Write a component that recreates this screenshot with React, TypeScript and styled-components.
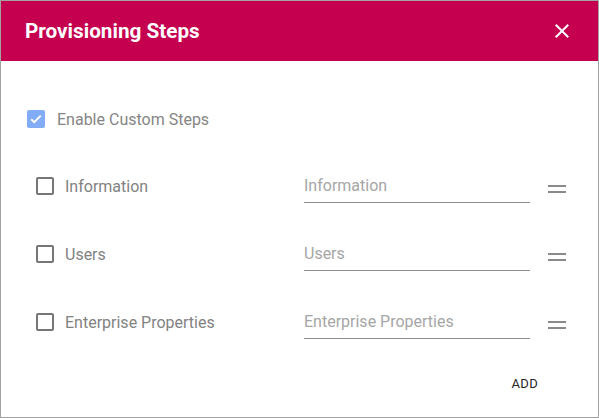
import React from "react";
import styled, { createGlobalStyle } from "styled-components";

const Global = createGlobalStyle`
  html, body { margin: 0; padding: 0; background: #ffffff; }
  body { font-family: Roboto, "Noto Sans", Arial, sans-serif; }
  * { box-sizing: border-box; }
`;

const Dialog = styled.div`
  width: 599px;
  height: 418px;
  border: 1px solid #a3a3a3;
  display: flex;
  flex-direction: column;
  background: #fff;
`;

const Header = styled.header`
  height: 60px;
  flex: none;
  background: #c4004f;
  display: flex;
  align-items: center;
  justify-content: space-between;
  padding: 0 24px;
`;

const Title = styled.h2`
  margin: 0;
  color: #fff;
  font-size: 20.7px;
  font-weight: 700;
  letter-spacing: 0;
`;

const CloseButton = styled.button`
  width: 24px;
  height: 24px;
  padding: 0;
  border: 0;
  background: transparent;
  display: flex;
  align-items: center;
  justify-content: center;
  cursor: pointer;
`;

const Body = styled.div`
  flex: 1;
  padding: 38px 0 0 26px;
  display: flex;
  flex-direction: column;
`;

const EnableRow = styled.label`
  height: 40px;
  display: flex;
  align-items: center;
  gap: 12px;
  font-size: 16px;
  color: #858585;
`;

const Box = styled.span<{ $checked?: boolean }>`
  width: 18px;
  height: 18px;
  flex: none;
  border-radius: 2px;
  display: flex;
  align-items: center;
  justify-content: center;
  ${(p) =>
    p.$checked
      ? `background: #82acf5;`
      : `border: 2px solid #767676;`}
`;

const StepList = styled.div`
  margin-top: 13px;
  display: flex;
  flex-direction: column;
`;

const StepRow = styled.div`
  height: 68px;
  display: grid;
  grid-template-columns: 250px 226px 18px;
  column-gap: 18px;
  align-items: center;
  padding-left: 9px;
`;

const StepLabel = styled.label`
  display: flex;
  align-items: center;
  gap: 11px;
  font-size: 16px;
  color: #828282;
`;

const Field = styled.input`
  width: 226px;
  height: 34px;
  margin-top: 0;
  padding: 0;
  border: 0;
  border-bottom: 1px solid #8e8e8e;
  outline: none;
  font-family: inherit;
  font-size: 16px;
  color: #333;
  background: transparent;
  &::placeholder { color: #a6a6a6; }
`;

const Handle = styled.span`
  width: 18px;
  height: 8px;
  display: flex;
  flex-direction: column;
  justify-content: space-between;
  margin-top: 5px;
  & > i {
    display: block;
    height: 2px;
    background: #8a8a8a;
  }
`;

const Actions = styled.div`
  margin-top: 9px;
  display: flex;
  justify-content: flex-end;
  padding-right: 52px;
`;

const AddButton = styled.button`
  height: 36px;
  padding: 0 8px;
  border: 0;
  background: transparent;
  font-family: inherit;
  font-size: 13px;
  font-weight: 400;
  color: #262626;
  letter-spacing: 0.3px;
  cursor: pointer;
`;

const steps = ["Information", "Users", "Enterprise Properties"];

export default function App() {
  return (
    <>
      <Global />
      <Dialog>
        <Header>
          <Title>Provisioning Steps</Title>
          <CloseButton aria-label="close">
            <svg width="24" height="24" viewBox="0 0 24 24">
              <path
                fill="#fff"
                d="M19 6.41L17.59 5 12 10.59 6.41 5 5 6.41 10.59 12 5 17.59 6.41 19 12 13.41 17.59 19 19 17.59 13.41 12z"
              />
            </svg>
          </CloseButton>
        </Header>
        <Body>
          <EnableRow>
            <Box $checked>
              <svg width="14" height="14" viewBox="0 0 14 14">
                <path d="M2.2 7.2l3 3 6.6-6.6" stroke="#fff" strokeWidth="2" fill="none" />
              </svg>
            </Box>
            Enable Custom Steps
          </EnableRow>
          <StepList>
            {steps.map((s) => (
              <StepRow key={s}>
                <StepLabel>
                  <Box />
                  {s}
                </StepLabel>
                <Field placeholder={s} />
                <Handle>
                  <i />
                  <i />
                </Handle>
              </StepRow>
            ))}
          </StepList>
          <Actions>
            <AddButton>ADD</AddButton>
          </Actions>
        </Body>
      </Dialog>
    </>
  );
}
